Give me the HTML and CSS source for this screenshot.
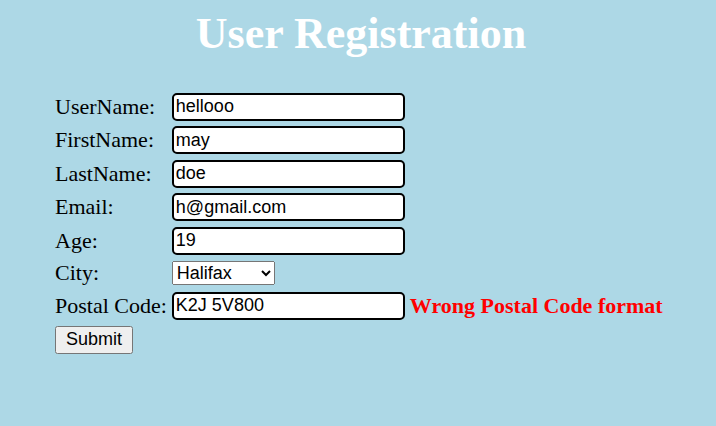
FILE: index.html
```html
<!DOCTYPE html>
<html>
<head>
<meta charset="utf-8">
<link rel="stylesheet" href="styles.css">
</head>
<body>
<h1 class="title">User Registration</h1>
<form class="form">
  <table class="grid">
    <tr><td class="label">UserName:</td><td><input class="field" type="text" value="hellooo"></td></tr>
    <tr><td class="label">FirstName:</td><td><input class="field" type="text" value="may"></td></tr>
    <tr><td class="label">LastName:</td><td><input class="field" type="text" value="doe"></td></tr>
    <tr><td class="label">Email:</td><td><input class="field" type="text" value="h@gmail.com"></td></tr>
    <tr><td class="label">Age:</td><td><input class="field" type="text" value="19"></td></tr>
    <tr><td class="label">City:</td><td><select class="city"><option>Halifax</option><option>Toronto</option></select></td></tr>
    <tr><td class="label">Postal Code:</td><td class="postal"><input class="field" type="text" value="K2J 5V800"><span class="error">Wrong Postal Code format</span></td></tr>
  </table>
  <button class="submit" type="button">Submit</button>
</form>
</body>
</html>
```
FILE: styles.css
```css
body {
  margin: 0;
  background: #add8e6;
  font-family: "Liberation Serif", "Times New Roman", serif;
}
.title {
  color: #fff;
  text-align: center;
  font-size: 44px;
  font-weight: bold;
  margin: 8px 0 0;
  padding-left: 6px;
}
.form {
  padding: 30px 0 0 52px;
}
.grid {
  border-collapse: separate;
  border-spacing: 2px;
}
.grid td {
  padding: 1.75px 1px;
}
.grid td.label {
  font-size: 22px;
  color: #000;
  padding-right: 2px;
}
.postal {
  white-space: nowrap;
}
.field {
  box-sizing: border-box;
  width: 233px;
  height: 28px;
  border: 2px solid #000;
  border-radius: 5px;
  font-family: "Liberation Sans", Arial, sans-serif;
  font-size: 18px;
  padding: 0 2px;
  margin: 0;
  background: #fff;
  vertical-align: middle;
}
.city {
  font-family: "Liberation Sans", Arial, sans-serif;
  font-size: 18px;
  height: 24px;
  width: 103px;
  margin: 0;
}
.error {
  color: #ff0000;
  font-weight: bold;
  font-size: 22px;
  margin-left: 5px;
  vertical-align: middle;
}
.submit {
  margin: 2px 0 0 3px;
  font-family: "Liberation Sans", Arial, sans-serif;
  font-size: 18px;
  height: 28px;
  padding: 0 9px;
}
```
